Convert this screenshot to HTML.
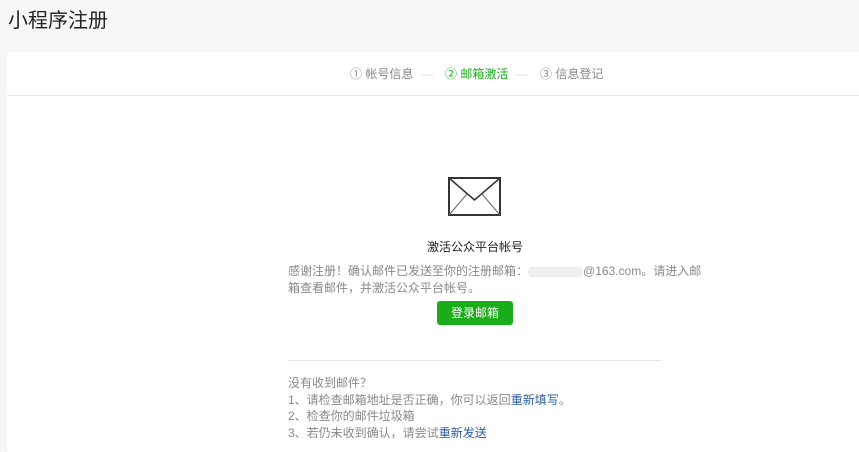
<!DOCTYPE html>
<html><head><meta charset="utf-8"><style>
*{margin:0;padding:0;box-sizing:border-box}
body{width:859px;height:444px;overflow:hidden;background:#f6f7f9;font-family:"Liberation Sans","Noto Sans CJK SC",sans-serif;font-size:12px;color:#888;position:relative}
.t{position:absolute;left:8px;top:8px;font-size:20px;color:#222;line-height:26px}
.card{position:absolute;left:7px;top:52px;width:860px;height:400px;background:#fff;border-radius:3px}
.hd{height:44px;border-bottom:1px solid #e7e7eb;position:relative;line-height:44px;color:#888}
.hd span{position:absolute;top:0;white-space:nowrap}
.sep{color:#ddd}
.g{color:#1aad19}
.a{position:absolute;left:0;width:950px;text-align:center}
.p{position:absolute;left:288px;width:380px;line-height:17px;white-space:nowrap}
.btn{position:absolute;left:437px;top:301px;width:76px;height:24px;background:#1aad19;color:#fff;border-radius:3px;text-align:center;line-height:24px;font-size:12px}
.blur{display:inline-block;width:55px;height:10px;background:#eee;vertical-align:middle;border-radius:4px}
.lk{color:#2b5aa3}
</style></head><body>
<div class="t">小程序注册</div>
<div class="card"><div class="hd"><span style="left:343px">① 帐号信息</span><span class="sep" style="left:414px">—</span><span class="g" style="left:438px">② 邮箱激活</span><span class="sep" style="left:509px">—</span><span style="left:533px">③ 信息登记</span></div></div>
<svg style="position:absolute;left:448px;top:177px" width="53" height="39" viewBox="0 0 53 39"><rect x="1" y="1" width="51" height="37" fill="none" stroke="#333" stroke-width="2"/><path d="M1 1L26.5 23L52 1" fill="none" stroke="#333" stroke-width="1.5"/><path d="M1 38L19 17M52 38L34 17" stroke="#666" stroke-width="1"/></svg>
<div class="a" style="top:238px;color:#222;line-height:18px">激活公众平台帐号</div>
<div class="p" style="top:263px">感谢注册！确认邮件已发送至你的注册邮箱：<span class="blur"></span>@163.com。请进入邮<br>箱查看邮件，并激活公众平台帐号。</div>
<div class="btn">登录邮箱</div>
<div style="position:absolute;left:288px;top:360px;width:374px;height:1px;background:#e7e7eb"></div>
<div class="p" style="top:375px;line-height:16.7px">没有收到邮件？<br>1、请检查邮箱地址是否正确，你可以返回<span class="lk">重新填写</span>。<br>2、检查你的邮件垃圾箱<br>3、若仍未收到确认，请尝试<span class="lk">重新发送</span></div>
</body></html>
